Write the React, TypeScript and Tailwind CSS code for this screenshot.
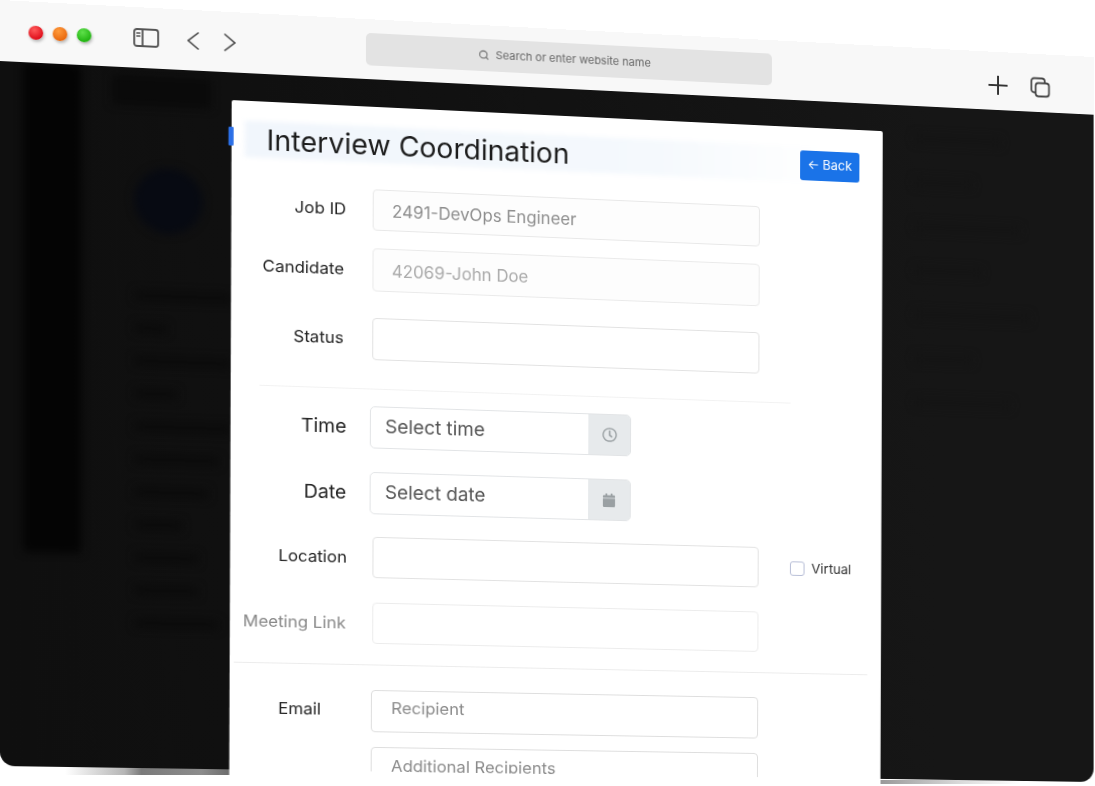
import { Search } from 'lucide-react';
import { FaCalendar, FaRegClock } from 'react-icons/fa';
import type { ReactNode } from 'react';

const fontStack = "font-['Inter','Noto_Sans',sans-serif]";

function Toolbar() {
  return (
    <header className="flex h-[61px] shrink-0 items-center bg-[#f8f8f8]">
      {/* traffic lights */}
      <div className="ml-[27px] flex gap-[9px]">
        <span className="h-[14px] w-[14px] rounded-full bg-[radial-gradient(circle_at_40%_30%,#ff5a5a,#e0101c_70%)] shadow-[1px_2px_3px_rgba(0,0,0,0.25)]" />
        <span className="h-[14px] w-[14px] rounded-full bg-[radial-gradient(circle_at_40%_30%,#ff9a3c,#ea6a10_70%)] shadow-[1px_2px_3px_rgba(0,0,0,0.25)]" />
        <span className="h-[14px] w-[14px] rounded-full bg-[radial-gradient(circle_at_40%_30%,#5ee04a,#22b512_70%)] shadow-[1px_2px_3px_rgba(0,0,0,0.25)]" />
      </div>

      <svg className="ml-[40px]" width="25" height="19" viewBox="0 0 25 19" fill="none" stroke="#555" strokeWidth="1.8">
        <rect x="1" y="1" width="23" height="17" rx="2.5" />
        <path d="M9 1v17" />
        <path d="M3 5h4M3 8h4" strokeWidth="1.4" />
      </svg>

      <svg className="ml-[26px]" width="14" height="20" viewBox="0 0 14 20" fill="none" stroke="#444" strokeWidth="1.6">
        <path d="M12 1.5 2 10l10 8.5" />
      </svg>
      <svg className="ml-[21px]" width="14" height="20" viewBox="0 0 14 20" fill="none" stroke="#444" strokeWidth="1.6">
        <path d="M2 1.5 12 10 2 18.5" />
      </svg>

      <div className="ml-[126px] flex h-[33px] w-[407px] items-center justify-center gap-[6px] rounded-[5px] bg-[#e3e3e3] pr-[12px] text-[11px] text-[#666]">
        <Search size={11} strokeWidth={2.2} />
        <span>Search or enter website name</span>
      </div>

      <svg className="ml-[223px] mt-[9px]" width="22" height="22" viewBox="0 0 22 22" fill="none" stroke="#333" strokeWidth="2">
        <path d="M11 1v20M1 11h20" />
      </svg>
      <svg className="ml-[22px] mt-[9px]" width="22" height="22" viewBox="0 0 22 22" fill="none" stroke="#444" strokeWidth="1.8">
        <rect x="6.5" y="6.5" width="14" height="14" rx="3" />
        <path d="M6.5 16.5H5a3 3 0 0 1-3-3V4.500a3 3 0 0 1 3-3h8a3 3 0 0 1 3 3v2" />
      </svg>
    </header>
  );
}

function BlurredPage() {
  const lines = ['w-[92px]', 'w-[30px]', 'w-[92px]', 'w-[40px]', 'w-[92px]', 'w-[80px]', 'w-[70px]', 'w-[45px]', 'w-[60px]', 'w-[60px]', 'w-[80px]'];
  const rightLines = ['w-[90px]', 'w-[60px]', 'w-[110px]', 'w-[70px]', 'w-[120px]', 'w-[60px]', 'w-[100px]'];
  return (
    <div className="flex min-h-0 flex-1 overflow-hidden rounded-b-[14px] border-r border-[#777] bg-[linear-gradient(90deg,#0f0f0f,#111111_40%,#161616_85%)]">
      <aside className="ml-[22px] h-[490px] w-[55px] bg-[#040404] blur-[4px]" />
      <div className="ml-[30px] flex w-[110px] flex-col blur-[4px]">
        <div className="mt-[8px] h-[30px] w-[95px] bg-[#0a0a0a]" />
        <div className="ml-[21px] mt-[62px] h-[66px] w-[66px] rounded-full bg-[#070a12]" />
        <div className="mt-[58px] flex flex-col gap-[23px] pl-[22px]">
          {lines.map((w, i) => (
            <div key={i} className={`h-[10px] bg-[#0b0b0b] ${w}`} />
          ))}
        </div>
      </div>
      <div className="ml-[690px] mt-[30px] flex flex-col gap-[38px] blur-[5px]">
        {rightLines.map((w, i) => (
          <div key={i} className={`h-[8px] bg-[#141414] ${w}`} />
        ))}
      </div>
    </div>
  );
}

function Box({ className, children }: { className: string; children?: ReactNode }) {
  return <div className={`flex items-center rounded-[4px] border ${className}`}>{children}</div>;
}

function Label({ className, children }: { className: string; children: ReactNode }) {
  return <div className={`shrink-0 text-right ${className}`}>{children}</div>;
}

function Divider({ className }: { className: string }) {
  return <div className={`h-px ${className}`} />;
}

function PickerInput({ placeholder, icon }: { placeholder: string; icon: ReactNode }) {
  return (
    <div className="ml-[23px] flex h-[43px] w-[260px] overflow-hidden rounded-[5px] border border-[#e2e4e6]">
      <div className="flex flex-1 items-center pl-[14px] text-[18.750px] text-[#555]">{placeholder}</div>
      <div className="flex w-[42px] items-center justify-center bg-[#e7eaec] text-[#9aa0a3]">{icon}</div>
    </div>
  );
}

function InterviewForm() {
  return (
    <section className="absolute left-[222px] top-[89px] h-[684px] w-[652px] origin-top-left skew-x-[-0.2deg] rounded-t-[2px] bg-white text-[#222]">
      <span className="absolute left-[-3px] top-[27px] h-[19px] w-[5px] rounded-[1px] bg-[#2b6fe6]" />
      <div className="absolute left-[13px] right-[60px] top-[20px] h-[37px] bg-[linear-gradient(90deg,#f1f6fc,#f5f9fd_70%,#ffffff)] blur-[2px]" />

      <div className="relative h-[677px] overflow-hidden blur-[0.3px]">
        <div className="ml-[13px] mr-[24px] mt-[20px] flex h-[37px] items-center justify-between pl-[21px]">
          <h1 className="text-[28px] leading-none text-[#1c1c1c]">Interview Coordination</h1>
          <button className="mt-[1px] flex h-[31px] w-[61px] items-center justify-center gap-[3px] rounded-[3px] bg-[#1a73e8] text-[13px] text-white">
            <span>←</span>
            <span>Back</span>
          </button>
        </div>

        <div className="mt-[27px] flex items-center">
          <Label className="w-[112px] text-[16.5px]">Job ID</Label>
          <Box className="ml-[26px] h-[42px] w-[388px] border-[#e8e8e8] bg-[#fdfdfd] pl-[18px] pt-[4px] text-[16.750px] text-[#8d8d8d]">2491-DevOps Engineer</Box>
        </div>
        <div className="mt-[18px] flex items-center">
          <Label className="w-[110px] text-[16.5px]">Candidate</Label>
          <Box className="ml-[28px] h-[44px] w-[388px] border-[#eaeaea] bg-[#fdfdfd] pl-[18px] pt-[4px] text-[16.750px] text-[#aaaaaa]">42069-John Doe</Box>
        </div>
        <div className="mt-[27px] flex items-center">
          <Label className="w-[110px] text-[16.5px]">Status</Label>
          <Box className="ml-[28px] h-[43px] w-[388px] border-[#e2e2e2] bg-white" />
        </div>

        <Divider className="ml-[28px] mr-[94px] mt-[29px] bg-[#f2f2f2]" />

        <div className="mt-[17px] flex items-center pl-[1px]">
          <Label className="w-[112px] pt-[2px] text-[19px]">Time</Label>
          <PickerInput placeholder="Select time" icon={<FaRegClock size={15} />} />
        </div>
        <div className="mt-[24px] flex items-center pl-[1px]">
          <Label className="w-[112px] pt-[2px] text-[19px]">Date</Label>
          <PickerInput placeholder="Select date" icon={<FaCalendar size={14} />} />
        </div>
        <div className="mt-[23px] flex items-center pl-[2px]">
          <Label className="w-[112px] text-[16.5px]">Location</Label>
          <Box className="ml-[25px] h-[42px] w-[387px] border-[#e2e2e2] bg-white" />
          <span className="ml-[32px] h-[15px] w-[15px] rounded-[3px] border border-[#b6bdd6]" />
          <span className="ml-[7px] text-[13.5px] text-[#333]">Virtual</span>
        </div>
        <div className="mt-[25px] flex items-center pl-[2px]">
          <Label className="w-[111px] text-[16.5px] text-[#888]">Meeting Link</Label>
          <Box className="ml-[26px] h-[42px] w-[387px] border-[#ececec] bg-white" />
        </div>

        <Divider className="ml-[4px] mr-[14px] mt-[21px] bg-[#ececec]" />

        <div className="mt-[25px] flex items-center pl-[2px]">
          <Label className="w-[87px] pb-[2px] text-[16.5px]">Email</Label>
          <Box className="ml-[49px] h-[43px] w-[388px] border-[#dedede] bg-white pb-[6px] pl-[19px] text-[16.5px] text-[#8a8a8a]">Recipient</Box>
        </div>
        <div className="ml-[138px] mt-[15px]">
          <Box className="h-[43px] w-[388px] border-[#dedede] bg-white pb-[4px] pl-[19px] text-[16.5px] text-[#8a8a8a]">Additional Recipients</Box>
        </div>
      </div>
    </section>
  );
}

export default function App() {
  return (
    <div className={`relative h-[786px] w-[1095px] overflow-hidden bg-white ${fontStack}`}>
      {/* smears under the window */}
      <div className="absolute left-[65px] top-[764px] h-[11px] w-[170px] bg-[linear-gradient(90deg,#ffffff,#b5b5b5_35%,#7a7a7a_45%,#8c8c8c_80%,#666666)]" />
      <div className="absolute left-[880px] top-[780px] h-[4px] w-[140px] bg-[linear-gradient(90deg,#999999,#dddddd_60%,#ffffff)]" />

      {/* browser window, tilted away to the right */}
      <div className="relative flex h-[766px] w-[1095px] origin-top-left flex-col [transform:matrix3d(1.05559,0.055,0,0.00005164,0,1,0,0,0,0,1,0,0,0,0,1)]">
        <Toolbar />
        <BlurredPage />
        <InterviewForm />
      </div>
    </div>
  );
}
